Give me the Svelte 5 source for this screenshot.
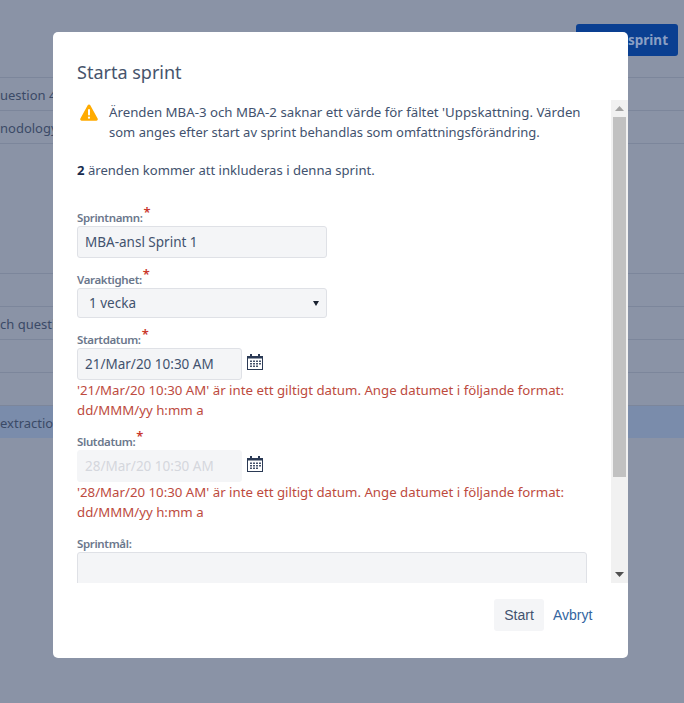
<script lang="ts">
  const rows = [
    { text: 'uestion 4', h: 33 },
    { text: 'nodology', h: 33 },
    { text: '', h: 130 },
    { text: '', h: 33 },
    { text: 'ch questi', h: 33 },
    { text: '', h: 33 },
    { text: '', h: 33 },
    { text: 'extractio', h: 33, selected: true }
  ];

  const errors = {
    start: "'21/Mar/20 10:30 AM' är inte ett giltigt datum. Ange datumet i följande format: dd/MMM/yy h:mm a",
    end: "'28/Mar/20 10:30 AM' är inte ett giltigt datum. Ange datumet i följande format: dd/MMM/yy h:mm a"
  };
</script>

{#snippet calendar()}
  <svg class="cal" width="18" height="18" viewBox="0 0 18 18">
    <rect x="1.500" y="3.500" width="15" height="13" fill="#fff" stroke="#2b3a55" />
    <rect x="1" y="3" width="16" height="2.500" fill="#2b3a55" />
    <rect x="4" y="1" width="2" height="3" fill="#2b3a55" />
    <rect x="12" y="1" width="2" height="3" fill="#2b3a55" />
    <path d="M4 7.500h2V9H4zM7 7.500h2V9H7zM10 7.500h2V9h-2zM13 7.500h2V9h-2zM4 10h2v1.500H4zM7 10h2v1.500H7zM10 10h2v1.500h-2zM13 10h2v1.500h-2zM4 12.500h2V14H4zM7 12.500h2V14H7zM10 12.500h2V14h-2z" fill="#46536c" />
  </svg>
{/snippet}

<div class="page">
  <div class="top">
    <div class="start-btn">Starta sprint</div>
  </div>
  {#each rows as row}
    <div class="row" class:selected={row.selected} style="height: {row.h - 1}px">{row.text}</div>
  {/each}
</div>

<div class="dialog">
  <h2>Starta sprint</h2>
  <div class="scroller">
    <div class="content">
      <div class="warning">
        <svg width="18" height="17" viewBox="0 0 18 17">
          <path d="M7.700 1.300a1.500 1.500 0 0 1 2.600 0l7.300 13.200a1.500 1.500 0 0 1-1.300 2.200H1.700a1.500 1.500 0 0 1-1.300-2.200z" fill="#ffab00" />
          <rect x="8" y="5" width="2" height="6.500" rx="1" fill="#fff" />
          <circle cx="9" cy="13.700" r="1.100" fill="#fff" />
        </svg>
        <p>Ärenden MBA-3 och MBA-2 saknar ett värde för fältet 'Uppskattning. Värden<br /><span class="second">som anges efter start av sprint behandlas som omfattningsförändring.</span></p>
      </div>
      <p class="count"><b>2</b> ärenden kommer att inkluderas i denna sprint.</p>

      <div class="field first">
        <label for="name">Sprintnamn:<span class="req">*</span></label>
        <input id="name" class="wide" value="MBA-ansl Sprint 1" />
      </div>

      <div class="field">
        <label for="dur">Varaktighet:<span class="req">*</span></label>
        <div class="select" id="dur">
          <span>1 vecka</span>
          <svg width="6" height="5" viewBox="0 0 6 5"><path d="M0 0h6L3 5z" fill="#1a2230" /></svg>
        </div>
      </div>

      <div class="field">
        <label for="start">Startdatum:<span class="req">*</span></label>
        <div class="date">
          <input id="start" value="21/Mar/20 10:30 AM" />
          {@render calendar()}
        </div>
        <p class="error">{errors.start}</p>
      </div>

      <div class="field">
        <label for="end">Slutdatum:<span class="req">*</span></label>
        <div class="date">
          <input id="end" class="disabled" value="28/Mar/20 10:30 AM" disabled />
          {@render calendar()}
        </div>
        <p class="error">{errors.end}</p>
      </div>

      <div class="field goal">
        <label for="goal">Sprintmål:</label>
        <div class="textarea" id="goal"></div>
      </div>
    </div>

    <div class="scrollbar">
      <div class="arrow"><svg width="9" height="5" viewBox="0 0 9 5"><path d="M4.500 0L9 5H0z" fill="#a3a3a3" /></svg></div>
      <div class="track"><div class="thumb"></div></div>
      <div class="arrow"><svg width="9" height="5" viewBox="0 0 9 5"><path d="M0 0h9L4.500 5z" fill="#505050" /></svg></div>
    </div>
  </div>

  <div class="footer">
    <button class="primary">Start</button>
    <button class="link">Avbryt</button>
  </div>
</div>

<style>
  :global(body) {
    margin: 0;
    background: #8a93a6;
    overflow: hidden;
  }

  .page {
    height: 703px;
    overflow: hidden;
    font-family: "Noto Sans", sans-serif;
    font-size: 13px;
    color: #3b4a67;
  }

  .top {
    display: flex;
    justify-content: flex-end;
    padding: 24px 6px 0 0;
    height: 53px;
    border-bottom: 1px solid #7c869b;
  }

  .start-btn {
    width: 102px;
    height: 32px;
    box-sizing: border-box;
    padding-right: 10px;
    background: #0a3f91;
    border-radius: 3px;
    color: #8a9fc4;
    font-size: 13.5px;
    font-weight: 700;
    line-height: 32px;
    text-align: right;
  }

  .row {
    border-bottom: 1px solid #7c869b;
    line-height: 34px;
    white-space: nowrap;
  }

  .row.selected {
    background: #7a8cab;
    border-bottom: none;
    height: 33px;
  }

  .dialog {
    position: absolute;
    left: 53px;
    top: 32px;
    width: 575px;
    height: 626px;
    background: #fff;
    border-radius: 5px;
    display: flex;
    flex-direction: column;
    font-family: "Noto Sans", sans-serif;
    font-size: 13.5px;
    color: #42526e;
  }

  h2 {
    margin: 0;
    padding: 27px 24px 0;
    height: 41px;
    font-size: 18px;
    font-weight: 400;
    line-height: 26px;
    color: #46546c;
  }

  .scroller {
    display: flex;
    height: 483px;
    overflow: hidden;
  }

  .content {
    flex: 1;
    min-width: 0;
    padding: 2px 24px 0;
    overflow: hidden;
  }

  .warning {
    display: flex;
    gap: 11px;
    padding-left: 3px;
  }

  .warning svg {
    flex: none;
    margin-top: 2px;
  }

  p {
    margin: 0;
  }

  .warning p {
    font-size: 13.25px;
    line-height: 20px;
    white-space: nowrap;
  }

  .warning .second {
    font-size: 13px;
  }

  .count {
    margin-top: 18px;
    font-size: 13.1px;
    line-height: 20px;
    color: #42526e;
  }

  .count b {
    color: #172b4d;
  }

  .field {
    margin-top: 13px;
  }

  .field.first {
    margin-top: 29px;
  }

  label {
    display: block;
    height: 17px;
    font-size: 11.5px;
    font-weight: 600;
    letter-spacing: -0.35px;
    line-height: 18px;
    color: #6b778c;
  }

  .req {
    color: #c9372c;
    font-size: 13px;
    line-height: 1;
    position: relative;
    top: -5px;
    margin-left: 1px;
  }

  input,
  .select,
  .textarea {
    box-sizing: border-box;
    display: block;
    background: #f4f5f7;
    border: 1px solid #dfe1e6;
    border-radius: 3px;
    font: inherit;
    color: #42526e;
  }

  input {
    height: 32px;
    padding: 0 7px;
    outline: none;
  }

  input.wide,
  .select {
    width: 250px;
  }

  .select {
    height: 30px;
    padding: 0 7px 0 11px;
    display: flex;
    align-items: center;
    justify-content: space-between;
  }

  .date {
    display: flex;
    align-items: center;
    gap: 4px;
  }

  .date input {
    width: 165px;
  }

  input.disabled {
    border-color: #f4f5f7;
    color: #d4d7dd;
  }

  .cal {
    flex: none;
    margin-bottom: 4px;
  }

  .error {
    font-size: 13.25px;
    line-height: 20px;
    color: #bd4b3e;
  }

  .textarea {
    width: 510px;
    height: 60px;
  }

  .scrollbar {
    flex: none;
    width: 17px;
    background: #f1f1f1;
    display: flex;
    flex-direction: column;
  }

  .arrow {
    height: 17px;
    display: flex;
    align-items: center;
    justify-content: center;
    flex: none;
  }

  .track {
    flex: 1;
    padding: 0 2px;
  }

  .thumb {
    height: 360px;
    background: #c1c1c1;
  }

  .footer {
    flex: 1;
    display: flex;
    justify-content: flex-end;
    align-items: flex-start;
    padding: 16px 24px 0 0;
  }

  button {
    border: none;
    font-family: "Liberation Sans", Arial, sans-serif;
    font-size: 14px;
    height: 32px;
    border-radius: 3px;
  }

  .primary {
    width: 50px;
    padding: 0;
    background: #f4f5f7;
    color: #42526e;
  }

  .link {
    box-sizing: border-box;
    width: 60px;
    text-align: left;
    background: none;
    color: #33659f;
    padding: 0 0 0 9px;
  }
</style>
